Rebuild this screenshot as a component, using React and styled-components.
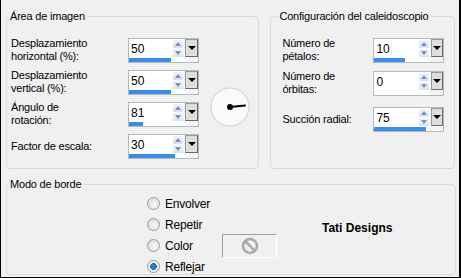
import styled, { createGlobalStyle } from 'styled-components'

const Global = createGlobalStyle`
  html, body { margin: 0; padding: 0; background: #f0f0f0; }
  body { font-family: "Liberation Sans", Arial, sans-serif; }
`

const Dialog = styled.div`
  width: 461px;
  height: 278px;
  box-sizing: border-box;
  background: #f0f0f0;
  border: 1px solid #000;
  border-top: none;
  border-right-width: 2px;
  padding: 16px 4px 0 5px;
  color: #000;
  font-size: 11px;
  letter-spacing: -0.2px;
  display: flex;
  flex-direction: column;
  gap: 15px;
`

const TopRow = styled.div`
  display: flex;
  gap: 11px;
`

/* Etched group box with its caption over the top line. */
const Group = styled.div`
  position: relative;
  box-sizing: border-box;
  width: ${p => p.$w}px;
  height: ${p => p.$h}px;
  border: 1px solid #d3dae2;
  border-radius: 4px;
  padding: ${p => p.$pad};
`

const Caption = styled.span`
  position: absolute;
  top: -8px;
  left: ${p => p.$left}px;
  padding: 0 2px;
  background: #f0f0f0;
  line-height: 14px;
`

const GroupBody = styled.div`
  display: flex;
`

const Rows = styled.div`
  display: flex;
  flex-direction: column;
`

const Row = styled.div`
  display: flex;
  align-items: ${p => (p.$single ? 'center' : 'flex-start')};
  margin-top: ${p => p.$mt || 0}px;
`

const Label = styled.div`
  width: ${p => p.$w}px;
  line-height: 13px;
  margin-top: ${p => (p.$single ? 0 : -1)}px;
`

const Spin = styled.div`
  box-sizing: border-box;
  width: 71px;
  height: 25px;
  border: 1px solid #b5b8bc;
  background: #f4f4f4;
  display: flex;
  flex-direction: column;
`

const SpinTop = styled.div`
  display: flex;
  align-items: flex-start;
  height: 19px;
`

const Field = styled.div`
  width: 56px;
  height: 19px;
  background: #fff;
  display: flex;
  align-items: center;
`

const Value = styled.span`
  flex: 1;
  padding-left: 2px;
  font-size: 12px;
  letter-spacing: 0;
`

const Arrows = styled.div`
  width: 10px;
  margin-right: 1px;
  display: flex;
  flex-direction: column;
  gap: 1px;
`

const ArrowBtn = styled.div`
  height: 8px;
  background: linear-gradient(#f2f6fc, #d8e2f0);
  display: flex;
  align-items: center;
  justify-content: center;
  &::after {
    content: '';
    border-left: 3px solid transparent;
    border-right: 3px solid transparent;
    ${p => (p.$up ? 'border-bottom' : 'border-top')}: 4px solid #7d8fb8;
  }
`

const DropBtn = styled.div`
  box-sizing: border-box;
  width: 13px;
  height: 18px;
  margin-left: 1px;
  background: #dedede;
  border: 1px solid #6a6a6a;
  border-top-color: #9a9a9a;
  border-left-color: #9a9a9a;
  display: flex;
  align-items: center;
  justify-content: center;
  &::after {
    content: '';
    border-left: 4px solid transparent;
    border-right: 4px solid transparent;
    border-top: 4px solid #000;
  }
`

const Track = styled.div`
  width: 56px;
  height: 4px;
  margin-top: 0;
  background: #fff;
`

const Bar = styled.div`
  height: 4px;
  background: #3a8ee6;
`

const Dial = styled.svg`
  margin: 49px 0 0 11px;
  flex-shrink: 0;
`

const BorderGrid = styled.div`
  display: grid;
  grid-template-columns: 75px 55px auto;
  grid-template-rows: repeat(4, 21px);
  margin-left: 140px;
`

const Radio = styled.label`
  grid-column: 1;
  display: flex;
  align-items: center;
  gap: 5px;
  font-size: 12px;
  letter-spacing: -0.2px;
`

const RadioDot = styled.span`
  box-sizing: border-box;
  width: 13px;
  height: 13px;
  border-radius: 50%;
  border: 1px solid #9a9a9a;
  background: ${p =>
    p.$on
      ? 'radial-gradient(circle, #1f7fd6 0 2.5px, #0c4f95 3px, #e8e8e8 3.5px, #fff 100%)'
      : 'radial-gradient(circle at 60% 60%, #fafafa 0, #d0d0d0 100%)'};
`

const Swatch = styled.div`
  grid-column: 2;
  grid-row: 3;
  align-self: center;
  box-sizing: border-box;
  width: 55px;
  height: 24px;
  border: 1px solid #fff;
  border-top-color: #a0a0a0;
  border-left-color: #a0a0a0;
  display: flex;
  align-items: center;
  justify-content: center;
`

const Signature = styled.div`
  grid-column: 3;
  grid-row: 2;
  align-self: end;
  margin-left: 45px;
  font-weight: bold;
  font-size: 12px;
  letter-spacing: 0;
  line-height: 14px;
  white-space: nowrap;
`

const SpinBox = ({ value, bar }) => (
  <Spin>
    <SpinTop>
      <Field>
        <Value>{value}</Value>
        <Arrows>
          <ArrowBtn $up />
          <ArrowBtn />
        </Arrows>
      </Field>
      <DropBtn />
    </SpinTop>
    <Track>
      <Bar style={{ width: bar }} />
    </Track>
  </Spin>
)

const Field2 = ({ label, value, bar, w, mt, single }) => (
  <Row $mt={mt} $single={single}>
    <Label $w={w} $single={single}>{label}</Label>
    <SpinBox value={value} bar={bar} />
  </Row>
)

export default function App() {
  return (
    <>
      <Global />
      <Dialog>
        <TopRow>
          <Group $w={254} $h={153} $pad="21px 0 0 4px">
            <Caption $left={1}>Área de imagen</Caption>
            <GroupBody>
              <Rows>
                <Field2 w={117} label={<>Desplazamiento<br />horizontal (%):</>} value="50" bar={42} />
                <Field2 w={117} mt={7} label={<>Desplazamiento<br />vertical (%):</>} value="50" bar={42} />
                <Field2 w={117} mt={7} label={<>Ángulo de<br />rotación:</>} value="81" bar={14} />
                <Field2 w={117} mt={7} single label="Factor de escala:" value="30" bar={46} />
              </Rows>
              <Dial width="40" height="40" viewBox="0 0 40 40">
                <circle cx="20" cy="20" r="19" fill="#fafafa" stroke="#cfcfcf" />
                <path d="M20 20 L35 18.6" stroke="#000" strokeWidth="2" strokeLinecap="round" />
                <circle cx="20" cy="20" r="3" fill="#000" />
              </Dial>
            </GroupBody>
          </Group>
          <Group $w={185} $h={153} $pad="21px 0 0 11px">
            <Caption $left={6}>Configuración del caleidoscopio</Caption>
            <Rows>
              <Field2 w={91} label={<>Número de<br />pétalos:</>} value="10" bar={31} />
              <Field2 w={91} mt={8} label={<>Número de<br />órbitas:</>} value="0" bar={0} />
              <Field2 w={91} mt={11} single label="Succión radial:" value="75" bar={52} />
            </Rows>
          </Group>
        </TopRow>
        <Group $w={450} $h={91} $pad="8px 0 0 0">
          <Caption $left={1}>Modo de borde</Caption>
          <BorderGrid>
            <Radio><RadioDot />Envolver</Radio>
            <Radio><RadioDot />Repetir</Radio>
            <Radio><RadioDot />Color</Radio>
            <Radio><RadioDot $on />Reflejar</Radio>
            <Swatch>
              <svg width="18" height="18" viewBox="0 0 18 18">
                <circle cx="9" cy="9" r="7" fill="none" stroke="#a9a9a9" strokeWidth="2.6" />
                <path d="M4.2 4.2 L13.8 13.8" stroke="#a9a9a9" strokeWidth="2.6" />
              </svg>
            </Swatch>
            <Signature>Tati Designs</Signature>
          </BorderGrid>
        </Group>
      </Dialog>
    </>
  )
}
